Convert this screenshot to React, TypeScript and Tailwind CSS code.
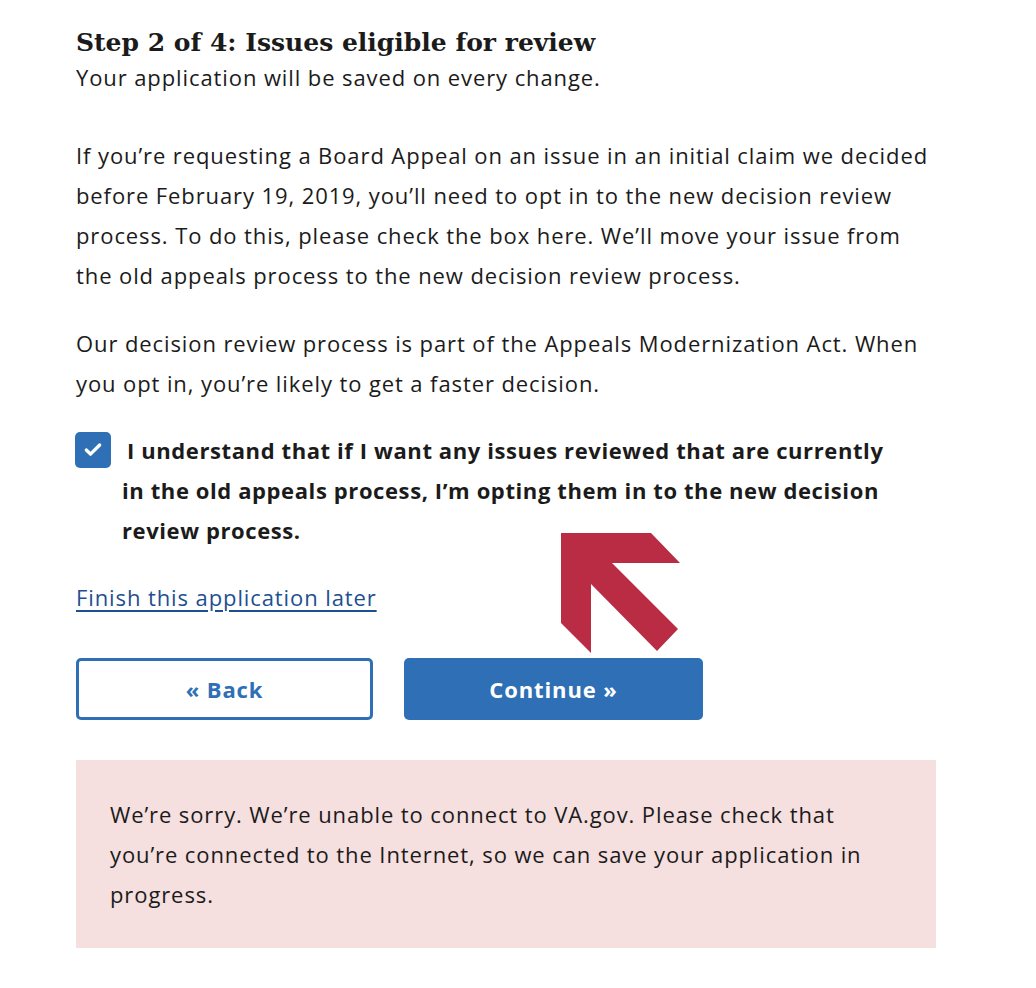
import { Check } from 'lucide-react';

const Arrow = () => (
  <svg width="124" height="124" viewBox="0 0 124 124" className="absolute left-[482px] top-[-17px]">
    <polygon points="3,0 93,0 122,30 54,30 120,96 99,118 33,51 33,120 3,90" fill="#b92c43" />
  </svg>
);

const App = () => {
  return (
    <div className="bg-white min-h-[988px] pl-[76px] pt-[26px] text-[#1b1b1b] tracking-[0.9px]" style={{ fontFamily: '"Open Sans", sans-serif' }}>
      <div className="w-[860px]">
        <h2 className="text-[25px] leading-[34px] font-bold tracking-normal" style={{ fontFamily: '"DejaVu Serif", serif' }}>
          Step 2 of 4: Issues eligible for review
        </h2>
        <p className="text-[22px] leading-[34px]">Your application will be saved on every change.</p>

        <div className="mt-[41px] text-[22px] leading-[40px]">
          <p>
            If you’re requesting a Board Appeal on an issue in an initial claim we decided before February 19, 2019, you’ll need to opt in to the new decision review process. To do this, please check the box here. We’ll move your issue from the old appeals process to the new decision review process.
          </p>
          <p className="mt-[28px]">
            Our decision review process is part of the Appeals Modernization Act. When you opt in, you’re likely to get a faster decision.
          </p>
        </div>

        <div className="mt-[27px] flex items-start">
          <div className="w-[36px] h-[36px] mt-[2px] -ml-[1px] shrink-0 rounded-[5px] bg-[#2e6fb5] flex items-center justify-center">
            <Check className="w-[20px] h-[20px] text-white" strokeWidth={4} />
          </div>
          <p className="ml-[11px] w-[790px] text-[22px] leading-[40px] font-bold tracking-[0.6px]">
            <span className="ml-[5px]">I understand that if I want any issues reviewed that are currently in the old appeals process, I’m opting them in to the new decision review process.</span>
          </p>
        </div>

        <div className="relative">
          <a href="#" className="inline-block mt-[27px] text-[22px] leading-[40px] text-[#1e4f90] underline underline-offset-[4px]">
            Finish this application later
          </a>
          <Arrow />
        </div>

        <div className="mt-[41px] flex gap-[31px]">
          <button className="w-[297px] h-[62px] rounded-[5px] border-[3px] border-[#2e6fb5] bg-white text-[#2e6fb5] text-[22px] font-bold">
            « Back
          </button>
          <button className="w-[299px] h-[62px] rounded-[5px] bg-[#2e6fb5] text-white text-[22px] font-bold">
            Continue »
          </button>
        </div>

        <div className="mt-[40px] bg-[#f5dfdf] px-[34px] pt-[34px] pb-[34px] text-[22px] leading-[40px]">
          <p className="w-[760px]">
            We’re sorry. We’re unable to connect to VA.gov. Please check that you’re connected to the Internet, so we can save your application in progress.
          </p>
        </div>
      </div>
    </div>
  );
};

export default App;
